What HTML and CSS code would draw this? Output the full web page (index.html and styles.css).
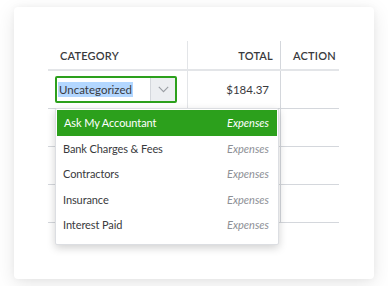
FILE: index.html
```html
<!DOCTYPE html>
<html>
<head>
<meta charset="utf-8">
<link rel="stylesheet" href="styles.css">
</head>
<body>
<div class="card">
  <div class="table">
    <div class="row head">
      <div class="cell c1">CATEGORY</div>
      <div class="cell c2">TOTAL</div>
      <div class="cell c3">ACTION</div>
    </div>
    <div class="row">
      <div class="cell c1 combo-cell">
        <div class="combo">
          <div class="combo-text"><span class="sel">Uncategorized</span></div>
          <div class="combo-btn">
            <svg width="11" height="7" viewBox="0 0 11 7"><path d="M0.8 0.8 L5.5 5.6 L10.2 0.8" fill="none" stroke="#9a9da3" stroke-width="1.1"/></svg>
          </div>
        </div>
        <div class="menu">
          <div class="item active"><span>Ask My Accountant</span><em>Expenses</em></div>
          <div class="item"><span>Bank Charges &amp; Fees</span><em>Expenses</em></div>
          <div class="item"><span>Contractors</span><em>Expenses</em></div>
          <div class="item"><span>Insurance</span><em>Expenses</em></div>
          <div class="item"><span>Interest Paid</span><em>Expenses</em></div>
        </div>
      </div>
      <div class="cell c2 num">$184.37</div>
      <div class="cell c3"></div>
    </div>
    <div class="row"><div class="cell c1"></div><div class="cell c2"></div><div class="cell c3"></div></div>
    <div class="row"><div class="cell c1"></div><div class="cell c2"></div><div class="cell c3"></div></div>
    <div class="row"><div class="cell c1"></div><div class="cell c2"></div><div class="cell c3"></div></div>
  </div>
</div>
</body>
</html>
```
FILE: styles.css
```css
* { box-sizing: border-box; }
html, body { margin: 0; padding: 0; background: #fff; }
body {
  font-family: Lato, "Open Sans", sans-serif;
  font-size: 11px;
  color: #393a3d;
  padding: 7px 14px;
}
.card {
  width: 360px;
  height: 272px;
  background: #fff;
  border-radius: 4px;
  box-shadow: 0 5px 20px rgba(0,0,0,0.10), 0 0 6px rgba(0,0,0,0.04);
  padding: 34px 35px 0 34px;
}
.table { display: flex; flex-direction: column; }
.row {
  display: grid;
  grid-template-columns: 140px 93px 58px;
  height: 38px;
  border-bottom: 1px solid #d4d7dc;
}
.row.head {
  height: 30px;
  border-bottom: 2px solid #e3e5e8;
  font-weight: 600;
  font-size: 11px;
  letter-spacing: 0.2px;
}
.cell {
  display: flex;
  align-items: center;
  padding: 0 12px;
}
.c1 { border-right: 1px solid #e3e5e8; }
.c2 { border-right: 1px solid #d4d7dc; justify-content: flex-end; padding-right: 11px; }
.head .c2 { padding-right: 7px; }
.head .cell { padding-top: 1px; }
.num { font-size: 11.5px; }
.combo-cell { position: relative; padding: 5px 0 0 7px; align-items: flex-start; }
.combo {
  width: 122px;
  height: 27px;
  border: 2px solid #2ca01c;
  border-radius: 2px;
  display: flex;
  background: #fff;
}
.combo-text {
  flex: 1;
  display: flex;
  align-items: center;
  padding-left: 1px;
  font-size: 11.5px;
}
.sel { background: #b3d7ff; padding: 0 1px; line-height: 15px; }
.combo-btn {
  width: 25px;
  background: #eceef1;
  border-left: 1px solid #d4d7dc;
  display: flex;
  align-items: center;
  justify-content: center;
}
.menu {
  position: absolute;
  left: 7px;
  top: 37px;
  width: 224px;
  background: #fff;
  border: 1px solid #dcdee2;
  border-radius: 2px;
  box-shadow: 0 3px 8px rgba(0,0,0,0.18);
  padding: 1px 0 6px;
  z-index: 2;
}
.item {
  height: 25.5px;
  display: flex;
  align-items: center;
  justify-content: space-between;
  padding: 0 9px 0 7px;
  font-size: 11px;
  letter-spacing: -0.1px;
  color: #393a3d;
}
.item em { color: #8d9096; font-style: italic; letter-spacing: 0; }
.item.active { background: #2ca01c; color: #fff; margin: 0 1px; padding: 0 8px 0 7px; }
.item.active em { color: #fff; }
```
